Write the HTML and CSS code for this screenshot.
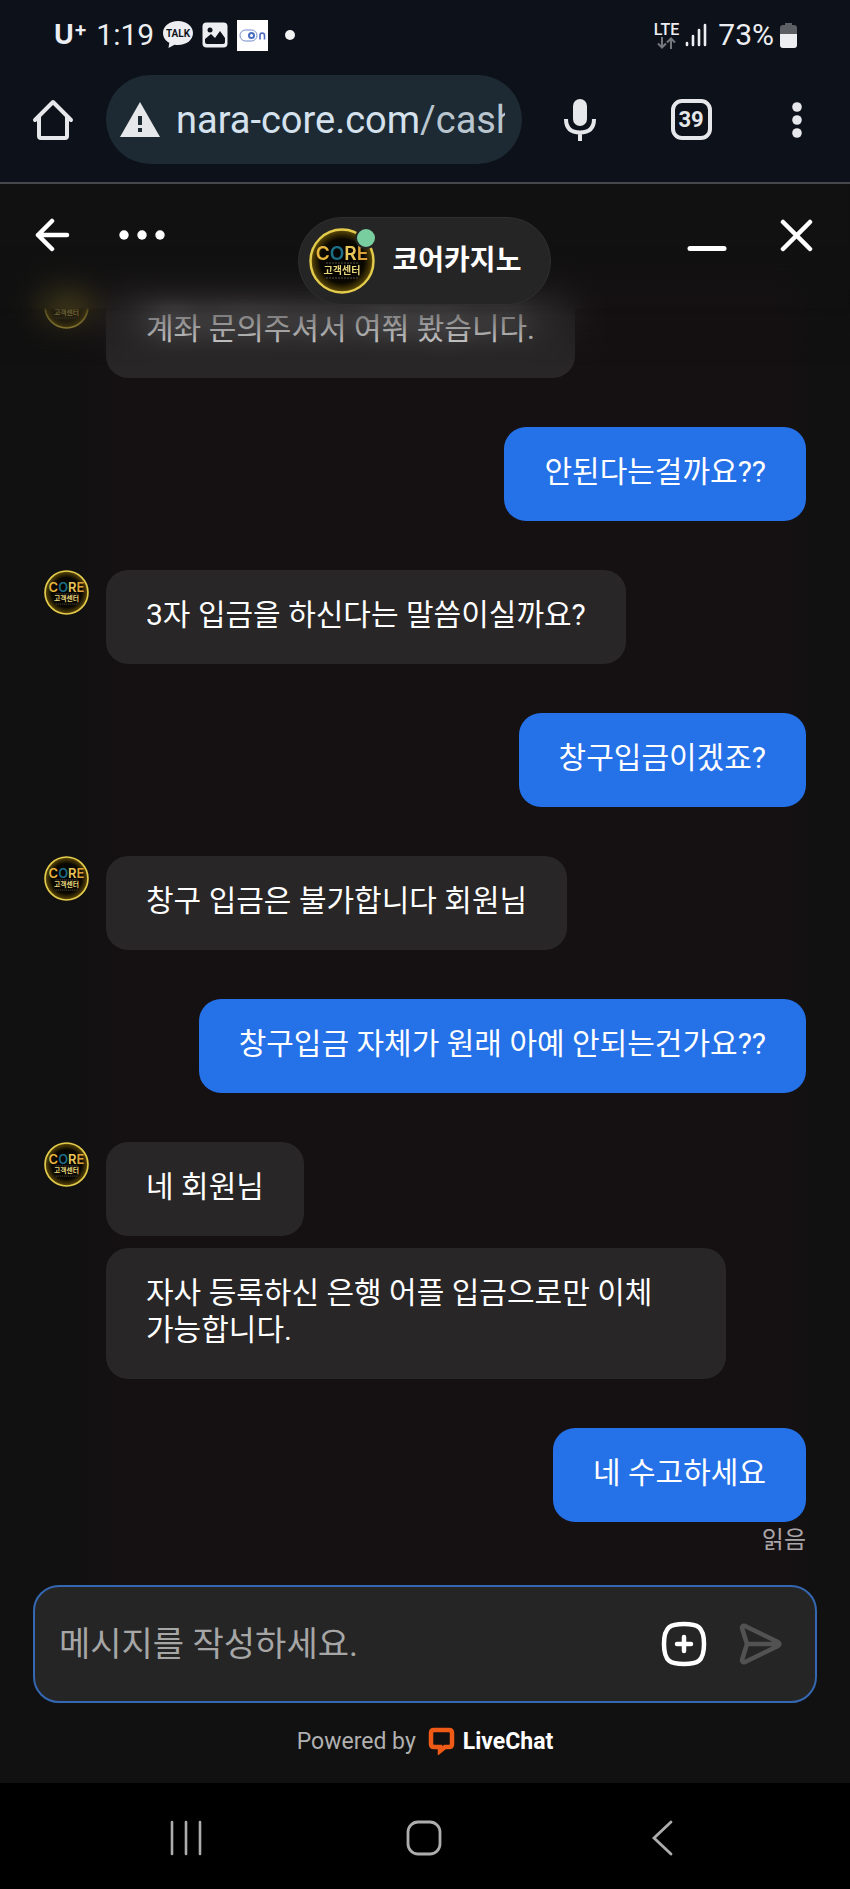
FILE: index.html
```html
<!DOCTYPE html>
<html lang="ko">
<head>
<meta charset="utf-8">
<meta name="viewport" content="width=device-width, initial-scale=1">
<title>코어카지노</title>
<link rel="stylesheet" href="styles.css">
</head>
<body>
<svg class="defs" aria-hidden="true">
  <defs>
    <radialGradient id="ring-glow">
      <stop offset="0" stop-color="#000"/>
      <stop offset=".7" stop-color="#0b0800"/>
      <stop offset=".92" stop-color="#4a3a06"/>
      <stop offset="1" stop-color="#7a6412"/>
    </radialGradient>
    <symbol id="avatar" viewBox="0 0 66 66">
      <circle cx="33" cy="33" r="31.500" fill="url(#ring-glow)" stroke="#e3cb4b" stroke-width="2.400"/>
      <text class="logo-word" x="33" y="32" text-anchor="middle"><tspan fill="#e8b63c">C</tspan><tspan fill="#1c6e86">O</tspan><tspan fill="#e8c65a">R</tspan><tspan fill="#dda338">E</tspan></text>
      <path d="M17 35h32M17 50h33" stroke="#55524a" stroke-width="1.200" stroke-dasharray="2 1"/>
      <text class="logo-sub" x="33" y="46" text-anchor="middle" fill="#e6d67c">고객센터</text>
    </symbol>
  </defs>
</svg>

<div class="status">
  <div class="status-left">
    <span class="carrier">U<sup>+</sup></span>
    <span class="clock">1:19</span>
    <svg class="talk" width="30" height="28" viewBox="0 0 30 28"><path d="M15 0C6.500 0 0 5 0 12c0 4.300 2.500 7.700 6.300 9.800L5.500 27l6-3.300c1.100.2 2.300.3 3.500.3 8.500 0 15-5 15-12S23.500 0 15 0z" fill="#eceef1"/><text x="15" y="16" text-anchor="middle" fill="#10141b">TALK</text></svg>
    <svg class="photo" width="26" height="26" viewBox="0 0 26 26"><rect x=".500" y=".500" width="25" height="25" rx="4" fill="#eceef1"/><circle cx="8" cy="8" r="2.500" fill="#0d1119"/><path d="M3 20v-3l6-5 4 4 5-7 5 7v4q0 2-2 2H5q-2 0-2-2z" fill="#0d1119"/></svg>
    <svg width="31" height="31" viewBox="0 0 31 31"><path fill="#fff" d="M0 0h31v31H0z"/><rect x="3" y="10" width="17" height="11" rx="5.500" fill="none" stroke="#6f88cc" stroke-width="1"/><circle cx="14.500" cy="15.500" r="2.500" fill="none" stroke="#4a6ac0" stroke-width="2"/><path d="M23 19.500v-4q0-2.500 2.200-2.500T27.500 15.500v4" fill="none" stroke="#4a6ac0" stroke-width="1.600"/></svg>
    <span class="dot"></span>
  </div>
  <div class="status-right">
    <span class="lte">LTE<svg width="19" height="12" viewBox="0 0 19 12" fill="none" stroke="#74777c" stroke-width="2"><path d="M5 0v10M1 6.500l4 4 4-4M14 12V2M10 5.500l4-4 4 4"/></svg></span>
    <svg width="22" height="24" viewBox="0 0 22 24" stroke="#eceef1" stroke-width="2.600" stroke-linecap="round"><path d="M2 20v2M8 13v9M14 7v15M20 2v20"/></svg>
    <span class="percent">73%</span>
    <svg width="17" height="25" viewBox="0 0 17 25"><path d="M5 0h7v2h2q3 0 3 3v6H0V5q0-3 3-3h2z" fill="#5c5f64"/><path d="M0 11h17v11q0 3-3 3H3q-3 0-3-3z" fill="#eceef1"/></svg>
  </div>
</div>

<div class="browser">
  <button class="tool home" aria-label="홈"><svg width="42" height="42" viewBox="0 0 42 42" fill="none" stroke="#e6e7ea" stroke-width="4" stroke-linejoin="round" stroke-linecap="round"><path d="M3 21L21 3l18 18M7 18v19q0 2 2 2h24q2 0 2-2V18"/></svg></button>
  <div class="url">
    <svg width="40" height="35" viewBox="0 0 40 35"><path d="M20 0l20 35H0z" fill="#e6e7ea"/><path d="M18 14h4v9h-4zM18 26h4v4h-4z" fill="#1e2a33"/></svg>
    <span class="address"><span class="domain">nara-core.com</span>/cash</span>
  </div>
  <button class="tool mic" aria-label="음성 검색"><svg width="34" height="44" viewBox="0 0 34 44"><rect x="10" y="1" width="14" height="27" rx="7" fill="#e6e7ea"/><path d="M3 21q0 13.500 14 13.500T31 21M17 34v9" fill="none" stroke="#e6e7ea" stroke-width="4"/></svg></button>
  <button class="tool tabs" aria-label="탭 39개"><span class="count">39</span></button>
  <button class="tool more" aria-label="메뉴"><svg width="12" height="38" viewBox="0 0 12 38" fill="#e6e7ea"><circle cx="6" cy="6" r="4.800"/><circle cx="6" cy="19" r="4.800"/><circle cx="6" cy="32" r="4.800"/></svg></button>
</div>

<main class="chat">
  <header class="chat-head">
    <div class="head-side">
      <button class="icon" aria-label="뒤로"><svg width="36" height="34" viewBox="0 0 36 34" fill="none" stroke="#fff" stroke-width="4.500" stroke-linecap="round" stroke-linejoin="round"><path d="M33 17H4M18 3L4 17l14 14"/></svg></button>
      <button class="icon" aria-label="옵션"><svg width="46" height="10" viewBox="0 0 46 10" fill="#fff"><circle cx="5" cy="5" r="4.700"/><circle cx="23" cy="5" r="4.700"/><circle cx="41" cy="5" r="4.700"/></svg></button>
    </div>
    <div class="agent">
      <div class="agent-face"><svg width="66" height="66"><use href="#avatar"/></svg><span class="online"></span></div>
      <h1>코어카지노</h1>
    </div>
    <div class="head-side right">
      <button class="icon" aria-label="최소화"><svg width="40" height="34" viewBox="0 0 40 34" stroke="#fff" stroke-width="5" stroke-linecap="round"><path d="M3 30.500h34"/></svg></button>
      <button class="icon" aria-label="닫기"><svg width="34" height="34" viewBox="0 0 34 34" stroke="#fff" stroke-width="4.500" stroke-linecap="round"><path d="M3 4l27 27M30 4L3 31"/></svg></button>
    </div>
  </header>

  <div class="messages">
    <div class="row"><svg class="face" width="45" height="45"><use href="#avatar"/></svg><div class="stack"><p class="bubble">계좌 문의주셔서 여쭤 봤습니다.</p></div></div>
    <div class="row mine"><p class="bubble">안된다는걸까요??</p></div>
    <div class="row"><svg class="face" width="45" height="45"><use href="#avatar"/></svg><div class="stack"><p class="bubble">3자 입금을 하신다는 말씀이실까요?</p></div></div>
    <div class="row mine"><p class="bubble">창구입금이겠죠?</p></div>
    <div class="row"><svg class="face" width="45" height="45"><use href="#avatar"/></svg><div class="stack"><p class="bubble">창구 입금은 불가합니다 회원님</p></div></div>
    <div class="row mine"><p class="bubble">창구입금 자체가 원래 아예 안되는건가요??</p></div>
    <div class="row"><svg class="face" width="45" height="45"><use href="#avatar"/></svg><div class="stack"><p class="bubble">네 회원님</p><p class="bubble">자사 등록하신 은행 어플 입금으로만 이체 가능합니다.</p></div></div>
    <div class="row mine"><p class="bubble">네 수고하세요</p><span class="read">읽음</span></div>
  </div>

  <form class="composer">
    <input type="text" aria-label="메시지" placeholder="메시지를 작성하세요.">
    <button class="icon" type="button" aria-label="첨부"><svg width="46" height="46" viewBox="0 0 46 46" fill="none" stroke="#fff" stroke-width="4.500" stroke-linecap="round"><path d="M23 3C36 3 43 5 43 23S36 43 23 43 3 41 3 23 10 3 23 3zM23 16v14M16 23h14"/></svg></button>
    <button class="icon" type="submit" aria-label="보내기"><svg width="44" height="42" viewBox="0 0 44 42" fill="none" stroke="#525252" stroke-width="4.500" stroke-linejoin="round" stroke-linecap="round"><path d="M4 5q0-3 3-2l33 16q3 2 0 4L7 39q-3 1-3-2L9 21zM9 21h31"/></svg></button>
  </form>

  <footer class="powered">
    <span>Powered by</span>
    <a href="#"><svg width="27" height="28" viewBox="0 0 27 28"><path d="M6 3h15q3 0 3 3v11q0 3-3 3h-4l-5 4v-4H6q-3 0-3-3V6q0-3 3-3z" fill="none" stroke="#f05a17" stroke-width="4.500"/></svg>LiveChat</a>
  </footer>
</main>

<nav class="sysnav">
  <button aria-label="최근 앱"><svg width="34" height="36" viewBox="0 0 34 36" stroke="#adadad" stroke-width="2.600" stroke-linecap="round"><path d="M3 2v32M17 2v32M31 2v32"/></svg></button>
  <button aria-label="홈"><svg width="36" height="36" viewBox="0 0 36 36" fill="none" stroke="#adadad" stroke-width="2.800"><rect x="2" y="2" width="32" height="32" rx="10"/></svg></button>
  <button aria-label="뒤로"><svg width="22" height="36" viewBox="0 0 22 36" fill="none" stroke="#adadad" stroke-width="2.800" stroke-linecap="round"><path d="M20 2L3 18l17 16"/></svg></button>
</nav>
</body>
</html>
```
FILE: styles.css
```css
* {
  box-sizing: border-box;
}

body {
  margin: 0;
  min-height: 100vh;
  display: flex;
  flex-direction: column;
  background: #111;
  color: #fff;
  font-family: Roboto, "Noto Sans CJK KR", sans-serif;
}

button {
  display: flex;
  align-items: center;
  justify-content: center;
  padding: 0;
  border: 0;
  background: none;
  color: inherit;
  font: inherit;
}

svg {
  display: block;
  flex: none;
}

.defs {
  position: absolute;
  width: 0;
  height: 0;
}

.logo-word {
  font: 600 19px Inter, sans-serif;
}

.logo-sub {
  font: 700 10px "Noto Sans CJK KR", sans-serif;
}

/* Phone status bar */
.status {
  display: flex;
  justify-content: space-between;
  height: 70px;
  padding: 0 53px 0 54px;
  background: #0d1119;
  color: #eceef1;
}

.status-left,
.status-right {
  display: flex;
  align-items: center;
  gap: 9px;
}

.carrier {
  display: flex;
  font: 700 27px/28px Inter, sans-serif;
}

.carrier sup {
  font-size: 20px;
  line-height: 16px;
}

.clock,
.percent {
  font-size: 30px;
  line-height: 36px;
}

.talk text {
  font: 700 10px Roboto, sans-serif;
}

.dot {
  width: 10px;
  height: 10px;
  margin-left: 8px;
  border-radius: 50%;
  background: #f3f3f3;
}

.lte {
  display: flex;
  flex-direction: column;
  align-items: center;
  font-size: 16px;
  font-weight: 500;
  line-height: 15px;
}

.status-right {
  gap: 6px;
}

.status-right .percent {
  margin-left: 5px;
}

/* Browser toolbar */
.browser {
  display: flex;
  padding: 5px 0 18px;
  border-bottom: 2px solid #46484c;
  background: #0d1119;
}

.tool {
  width: 106px;
}

.tool.mic {
  width: 116px;
}

.url {
  flex: 1;
  min-width: 0;
  height: 89px;
  display: flex;
  align-items: center;
  gap: 16px;
  padding: 0 17px 0 14px;
  border-radius: 45px;
  background: #1e2a33;
}

.address {
  flex: 1;
  overflow: hidden;
  white-space: nowrap;
  color: #b9c6cf;
  font-size: 38px;
  line-height: 48px;
}

.domain {
  color: #d5e2ee;
}

.count {
  width: 41px;
  height: 41px;
  border: 4px solid #e6e7ea;
  border-radius: 11px;
  color: #e6e7ea;
  font-size: 22px;
  font-weight: 700;
  line-height: 33px;
}

/* Chat */
.chat {
  position: relative;
  flex: 1;
  display: flex;
  flex-direction: column;
}

.chat-head {
  position: absolute;
  z-index: 1;
  inset: 0 0 auto;
  display: grid;
  grid-template-columns: 1fr auto 1fr;
  align-items: start;
  padding: 27px 29px 0 28px;
}

.chat-head::before {
  content: "";
  position: absolute;
  z-index: -1;
  inset: 0 0 -60px;
  background: linear-gradient(#111 60px, rgba(17, 17, 17, 0) 130px);
  backdrop-filter: blur(16px);
  mask-image: linear-gradient(#000 124px, rgba(0, 0, 0, 0.75) 126px, rgba(0, 0, 0, 0.4) 155px, transparent);
}

.head-side {
  display: flex;
  gap: 42px;
}

.head-side.right {
  justify-content: flex-end;
}

.icon {
  flex: none;
  width: 48px;
  height: 48px;
}

.agent {
  display: flex;
  align-items: center;
  gap: 18px;
  height: 88px;
  margin-top: 6px;
  padding: 0 29px 0 10px;
  border: 1px solid #303030;
  border-radius: 44px;
  background: #252525;
}

.agent-face {
  position: relative;
}

.online {
  position: absolute;
  top: -1px;
  right: -2px;
  width: 22px;
  height: 22px;
  border: 2px solid #252525;
  border-radius: 50%;
  background: #79ce9f;
}

h1 {
  margin: 0;
  font-size: 28px;
  font-weight: 700;
  line-height: 36px;
}

.messages {
  flex: 1;
  display: flex;
  flex-direction: column;
  gap: 49px;
  padding: 100px 44px 28px;
  background: linear-gradient(90deg, #111 60px, #151113 130px, #151113 calc(100% - 70px), #111 calc(100% - 30px));
}

.row {
  display: flex;
  align-items: flex-start;
  gap: 17px;
}

.row.mine {
  flex-direction: column;
  align-items: flex-end;
  gap: 2px;
}

.stack {
  display: flex;
  flex-direction: column;
  align-items: flex-start;
  gap: 12px;
}

.bubble {
  max-width: 620px;
  margin: 0;
  padding: 26px 40px 31px;
  border-radius: 22px;
  background: #282627;
  font-size: 30px;
  line-height: 37px;
  word-break: keep-all;
}

.mine .bubble {
  background: #2571e8;
}

.read {
  color: #aaa5a8;
  font-size: 24px;
  line-height: 33px;
}

.composer {
  display: flex;
  align-items: center;
  gap: 28px;
  height: 118px;
  margin: 0 33px;
  padding: 0 31px 0 24px;
  border: 2px solid #3568b2;
  border-radius: 26px;
  background: #252525;
}

.composer input {
  flex: 1;
  min-width: 0;
  height: 60px;
  padding: 0;
  border: 0;
  outline: 0;
  background: none;
  color: #fff;
  font: inherit;
  font-size: 34px;
}

.composer input::placeholder {
  color: #a6a6a6;
  opacity: 1;
}

.powered {
  display: flex;
  align-items: center;
  justify-content: center;
  gap: 12px;
  height: 80px;
  padding-bottom: 4px;
  color: #b0b0b0;
  font-size: 23px;
}

.powered a {
  display: flex;
  align-items: center;
  gap: 8px;
  color: #fff;
  font-weight: 700;
  text-decoration: none;
}

/* System navigation */
.sysnav {
  display: grid;
  grid-template-columns: repeat(3, 1fr);
  height: 106px;
  padding: 3px 69px 0 67px;
  background: #000;
}
```
